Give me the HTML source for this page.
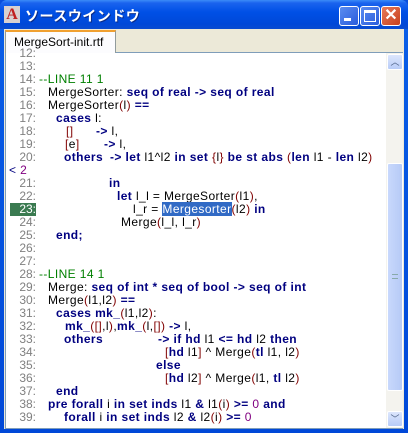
<!DOCTYPE html>
<html><head><meta charset="utf-8"><style>
*{margin:0;padding:0;box-sizing:border-box}
body{width:408px;height:433px;overflow:hidden;background:#0A4EDB;font-family:"Liberation Sans","Noto Sans CJK JP",sans-serif;position:relative}
#win{position:absolute;left:0;top:0;width:408px;height:433px;background:linear-gradient(#0A5FE8,#0048D8);border-radius:7px 7px 0 0}
#title{position:absolute;left:0;top:0;width:408px;height:29px;background:linear-gradient(#3C8CF8 0,#1A63EE 3px,#0050E6 12px,#0048D8 24px,#0A4BD0 29px);border-radius:7px 7px 0 0}
#tt{position:absolute;left:25px;top:6px;color:#fff;font-size:14px;font-weight:bold;text-shadow:1px 1px #0A2C8A;letter-spacing:0.5px}
.btn{position:absolute;top:6px;width:20px;height:20px;border:1px solid #fff;border-radius:3px;background:linear-gradient(135deg,#5A8CF0,#2A5CDC)}
#cls{background:linear-gradient(135deg,#E87A5A,#C8401C)}
#client{position:absolute;left:4px;top:29px;width:400px;height:400px;background:#ECE9D8}
#tab{position:absolute;left:1px;top:1px;width:111px;height:23px;background:#FCFCFE;border:1px solid #919B9C;border-bottom:none;border-top:2px solid #F0A030;font-size:12px;padding:3px 0 0 8px}
#ed{position:absolute;left:1px;top:23px;width:398px;height:377px;background:#fff;border:1px solid #7F9DB9;overflow:hidden}
.l{position:absolute;height:13px;line-height:13px;font-size:12px;white-space:pre;color:#000;letter-spacing:0.4px}
.n{position:absolute;left:5px;width:31px;text-align:right;height:13px;line-height:13px;font-size:12px;color:#808080}
b{color:#000080;font-weight:bold}
.p{color:#800000}.g{color:#008000}.m{color:#800080}
.ar{position:absolute;left:1px;width:16px;height:16px;background:linear-gradient(#DCE6FC,#B8CCF8);border:1px solid #fff;border-radius:2px;color:#4D6185;font-size:9px;text-align:center;line-height:14px}
#th{position:absolute;background:linear-gradient(90deg,#C8D8FC,#B6CAF6);border:1px solid #fff;border-radius:2px}
</style></head><body>
<div id="win">
<div id="title">
<div style="position:absolute;left:4px;top:6px;width:16px;height:17px;background:#d8d0d0;color:#C02020;font:bold 16px 'Liberation Serif',serif;line-height:17px;text-align:center">A</div>
<div id="tt">ソースウインドウ</div>
<div class="btn" style="left:339px"><div style="position:absolute;left:4px;top:11px;width:7px;height:3px;background:#fff"></div></div>
<div class="btn" style="left:360px"><div style="position:absolute;left:3px;top:3px;width:12px;height:12px;border:1px solid #fff;border-top:3px solid #fff"></div></div>
<div class="btn" id="cls" style="left:381px"><div style="position:absolute;left:0;top:-1px;width:18px;text-align:center;color:#fff;font:bold 16px 'Liberation Sans';line-height:20px">✕</div></div>
</div>
<div id="client">
<div id="ed"></div>
<div id="tab">MergeSort-init.rtf</div>
</div>
</div>
<div style="position:absolute;left:386px;top:53px;width:17px;height:375px;background:#F4F3EE">
<div class="ar" style="top:1px">︿</div>
<div id="th" style="left:1px;top:110px;width:16px;height:228px"></div>
<div style="position:absolute;left:6px;top:221px;width:6px;height:5px;border-top:1px solid #8aa;border-bottom:1px solid #8aa"></div>
<div class="ar" style="top:358px">﹀</div>
</div>
<div style="position:absolute;left:0;top:0">
<div class="n" style="top:47px">12:</div>
<div class="n" style="top:60px">13:</div>
<div class="n" style="top:73px">14:</div><div class="l g" style="left:39px;top:73px">--LINE 11 1</div>
<div class="n" style="top:86px">15:</div><div class="l" style="left:48px;top:86px">MergeSorter: <b>seq of real -&gt; seq of real</b></div>
<div class="n" style="top:99px">16:</div><div class="l" style="left:48px;top:99px">MergeSorter<span class="p">(</span>l<span class="p">)</span> <b>==</b></div>
<div class="n" style="top:112px">17:</div><div class="l" style="left:56px;top:112px"><b>cases</b> l:</div>
<div class="n" style="top:125px">18:</div><div class="l" style="left:66px;top:125px"><span class="p">[]</span></div><div class="l" style="left:96px;top:125px"><b>-&gt;</b> l,</div>
<div class="n" style="top:138px">19:</div><div class="l" style="left:65px;top:138px"><span class="p">[</span>e<span class="p">]</span></div><div class="l" style="left:104px;top:138px"><b>-&gt;</b> l,</div>
<div class="n" style="top:151px">20:</div><div class="l" style="left:64px;top:151px"><b>others</b></div><div class="l" style="left:110px;top:151px"><b>-&gt; let</b> l1^l2 <b>in set</b> <span class="p">{</span>l<span class="p">}</span> <b>be st abs</b> <span class="p">(</span><b>len</b> l1 - <b>len</b> l2<span class="p">)</span></div>
<div class="l" style="left:9px;top:164px;color:#000080">&lt; <span class="m">2</span></div>
<div class="n" style="top:177px">21:</div><div class="l" style="left:109px;top:177px"><b>in</b></div>
<div class="n" style="top:190px">22:</div><div class="l" style="left:117px;top:190px"><b>let</b> l_l = MergeSorter<span class="p">(</span>l1<span class="p">)</span>,</div>
<div style="position:absolute;left:10px;top:203px;width:26px;height:13px;background:#3A7A50"></div>
<div class="n" style="top:203px;color:#fff">23:</div><div class="l" style="left:133px;top:203px">l_r = <span style="background:#316AC5;color:#fff">Mergesorter</span><span class="p">(</span>l2<span class="p">)</span> <b>in</b></div>
<div class="n" style="top:216px">24:</div><div class="l" style="left:121px;top:216px">Merge<span class="p">(</span>l_l, l_r<span class="p">)</span></div>
<div class="n" style="top:229px">25:</div><div class="l" style="left:56px;top:229px"><b>end;</b></div>
<div class="n" style="top:242px">26:</div>
<div class="n" style="top:255px">27:</div>
<div class="n" style="top:268px">28:</div><div class="l g" style="left:39px;top:268px">--LINE 14 1</div>
<div class="n" style="top:281px">29:</div><div class="l" style="left:48px;top:281px">Merge: <b>seq of int * seq of bool -&gt; seq of int</b></div>
<div class="n" style="top:294px">30:</div><div class="l" style="left:48px;top:294px">Merge<span class="p">(</span>l1,l2<span class="p">)</span> <b>==</b></div>
<div class="n" style="top:307px">31:</div><div class="l" style="left:56px;top:307px"><b>cases mk_</b><span class="p">(</span>l1,l2<span class="p">)</span>:</div>
<div class="n" style="top:320px">32:</div><div class="l" style="left:65px;top:320px"><b>mk_</b><span class="p">([]</span>,l<span class="p">)</span>,<b>mk_</b><span class="p">(</span>l,<span class="p">[])</span> <b>-&gt;</b> l,</div>
<div class="n" style="top:333px">33:</div><div class="l" style="left:64px;top:333px"><b>others</b></div><div class="l" style="left:158px;top:333px"><b>-&gt; if hd</b> l1 <b>&lt;= hd</b> l2 <b>then</b></div>
<div class="n" style="top:346px">34:</div><div class="l" style="left:165px;top:346px"><span class="p">[</span><b>hd</b> l1<span class="p">]</span> ^ Merge<span class="p">(</span><b>tl</b> l1, l2<span class="p">)</span></div>
<div class="n" style="top:359px">35:</div><div class="l" style="left:156px;top:359px"><b>else</b></div>
<div class="n" style="top:372px">36:</div><div class="l" style="left:165px;top:372px"><span class="p">[</span><b>hd</b> l2<span class="p">]</span> ^ Merge<span class="p">(</span>l1, <b>tl</b> l2<span class="p">)</span></div>
<div class="n" style="top:385px">37:</div><div class="l" style="left:56px;top:385px"><b>end</b></div>
<div class="n" style="top:398px">38:</div><div class="l" style="left:48px;top:398px"><b>pre forall</b> i <b>in set inds</b> l1 <b>&amp;</b> l1<span class="p">(</span>i<span class="p">)</span> <b>&gt;=</b> <span class="m">0</span> <b>and</b></div>
<div class="n" style="top:411px">39:</div><div class="l" style="left:64px;top:411px"><b>forall</b> i <b>in set inds</b> l2 <b>&amp;</b> l2<span class="p">(</span>i<span class="p">)</span> <b>&gt;=</b> <span class="m">0</span></div>
</div>
</body></html>
